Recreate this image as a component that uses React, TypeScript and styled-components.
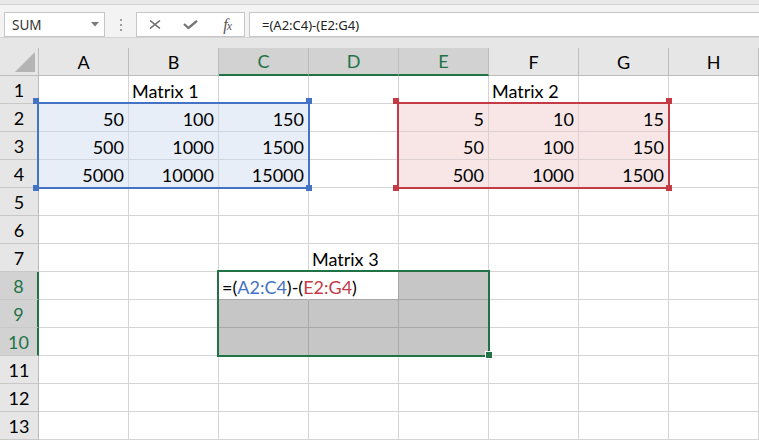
import React from 'react';
import styled, { createGlobalStyle } from 'styled-components';

const GlobalStyle = createGlobalStyle`
  body {
    margin: 0;
    background: #ffffff;
    overflow: hidden;
  }
`;

const COLS = ['A', 'B', 'C', 'D', 'E', 'F', 'G', 'H'];
const ROWS = Array.from({ length: 13 }, (_, i) => i + 1);
const COL_W = 90;
const ROW_H = 28;
const HEAD_W = 39;

const green = '#217346';
const blue = '#4472c4';
const red = '#c43b46';

const Page = styled.div`
  width: 759px;
  height: 440px;
  display: flex;
  flex-direction: column;
  font-family: Lato, 'Open Sans', sans-serif;
`;

const FormulaBar = styled.div`
  height: 48px;
  display: flex;
  flex-direction: column;
  background: #e6e6e6;
  font-family: 'Noto Sans', 'Open Sans', sans-serif;
`;

const TopStrip = styled.div`
  height: 4px;
  background: #e9e9e9;
  border-bottom: 1px solid #d4d4d4;
`;

const ToolRow = styled.div`
  height: 33px;
  box-sizing: border-box;
  padding-top: 7px;
  display: flex;
  align-items: flex-start;
  background: #f3f3f3;
  border-bottom: 1px solid #d4d4d4;
`;

const NameBox = styled.div`
  margin-left: 4px;
  width: 101px;
  height: 25px;
  box-sizing: border-box;
  display: flex;
  align-items: center;
  justify-content: space-between;
  padding: 0 5px 0 7px;
  background: #fff;
  border: 1px solid #c6c6c6;
  font-size: 13.5px;
  color: #333;
`;

const Dots = styled.div`
  width: 31px;
  height: 25px;
  display: flex;
  flex-direction: column;
  align-items: center;
  justify-content: center;
  gap: 3px;

  span {
    width: 2px;
    height: 2px;
    background: #a0a0a0;
  }
`;

const ButtonGroup = styled.div`
  width: 109px;
  height: 25px;
  box-sizing: border-box;
  display: flex;
  background: #fff;
  border: 1px solid #c6c6c6;
`;

const BarButton = styled.div`
  width: 36px;
  display: flex;
  align-items: center;
  justify-content: center;
  color: #6d6d6d;
`;

const Fx = styled.span`
  font-family: 'Liberation Serif', serif;
  font-style: italic;
  font-size: 16px;
  color: #555;
  letter-spacing: -1px;
  padding-left: 2px;

  small {
    font-size: 12px;
  }
`;

const FormulaInput = styled.div`
  flex: 1;
  margin-left: 4px;
  height: 25px;
  box-sizing: border-box;
  display: flex;
  align-items: center;
  padding-left: 12px;
  background: #fff;
  border: 1px solid #c6c6c6;
  border-right: none;
  font-size: 13px;
  color: #222;
`;

const Sheet = styled.div`
  position: relative;
  display: grid;
  grid-template-columns: ${HEAD_W}px repeat(${COLS.length}, ${COL_W}px);
  grid-auto-rows: ${ROW_H}px;
  font-size: 18px;
  line-height: 18px;
  color: #000;
`;

const Corner = styled.div`
  background: #e6e6e6;
  border-right: 1px solid #bcbcbc;
  border-bottom: 1px solid #bcbcbc;
  box-sizing: border-box;
  display: flex;
  align-items: flex-end;
  justify-content: flex-end;
  padding: 0 3px 3px 0;
`;

const ColHeader = styled.div<{ $selected: boolean }>`
  box-sizing: border-box;
  display: flex;
  align-items: center;
  justify-content: center;
  background: ${(p) => (p.$selected ? '#d2d2d2' : '#e6e6e6')};
  color: ${(p) => (p.$selected ? green : '#000')};
  border-right: 1px solid #bcbcbc;
  border-bottom: ${(p) => (p.$selected ? `2px solid ${green}` : '1px solid #bcbcbc')};
`;

const RowHeader = styled.div<{ $selected: boolean }>`
  box-sizing: border-box;
  display: flex;
  align-items: center;
  justify-content: center;
  background: ${(p) => (p.$selected ? '#d2d2d2' : '#e6e6e6')};
  color: ${(p) => (p.$selected ? green : '#000')};
  border-right: ${(p) => (p.$selected ? `2px solid ${green}` : '1px solid #bcbcbc')};
  border-bottom: 1px solid #c8c8c8;
`;

const Cell = styled.div<{ $fill: string; $line: string; $right: boolean; $editing?: boolean }>`
  box-sizing: border-box;
  display: flex;
  align-items: flex-end;
  justify-content: ${(p) => (p.$right ? 'flex-end' : 'flex-start')};
  padding: 0 4px 3px 3px;
  background: ${(p) => p.$fill};
  border-right: 1px solid ${(p) => (p.$editing ? p.$fill : p.$line)};
  border-bottom: 1px solid ${(p) => p.$line};
  white-space: nowrap;
  overflow: ${(p) => (p.$editing ? 'visible' : 'hidden')};
  position: ${(p) => (p.$editing ? 'relative' : 'static')};
  z-index: ${(p) => (p.$editing ? 1 : 'auto')};
`;

const Ref = styled.span<{ $color: string }>`
  color: ${(p) => p.$color};
`;

const RangeBox = styled.div<{ $color: string }>`
  position: absolute;
  box-sizing: border-box;
  border: 2px solid ${(p) => p.$color};
  pointer-events: none;
  z-index: 2;
`;

const Handle = styled.div<{ $color: string }>`
  position: absolute;
  width: 6px;
  height: 6px;
  background: ${(p) => p.$color};
  z-index: 3;
`;

const FillHandle = styled(Handle)`
  outline: 1px solid #fff;
`;

type Range = { c0: number; r0: number; c1: number; r1: number };

const blueRange: Range = { c0: 0, r0: 2, c1: 2, r1: 4 };
const redRange: Range = { c0: 4, r0: 2, c1: 6, r1: 4 };
const greenRange: Range = { c0: 2, r0: 8, c1: 4, r1: 10 };

const values: Record<string, string> = {
  B1: 'Matrix 1',
  F1: 'Matrix 2',
  D7: 'Matrix 3',
};
const m1 = [
  [50, 100, 150],
  [500, 1000, 1500],
  [5000, 10000, 15000],
];
const m2 = [
  [5, 10, 15],
  [50, 100, 150],
  [500, 1000, 1500],
];
m1.forEach((row, r) => row.forEach((v, c) => (values[COLS[c] + (r + 2)] = String(v))));
m2.forEach((row, r) => row.forEach((v, c) => (values[COLS[c + 4] + (r + 2)] = String(v))));

const inRange = (g: Range, c: number, r: number) => c >= g.c0 && c <= g.c1 && r >= g.r0 && r <= g.r1;

// box geometry inside the sheet (header row is row 0)
const rangeRect = (g: Range) => ({
  left: HEAD_W + g.c0 * COL_W - 2,
  top: g.r0 * ROW_H - 2,
  width: (g.c1 - g.c0 + 1) * COL_W + 3,
  height: (g.r1 - g.r0 + 1) * ROW_H + 3,
});

function cellLook(c: number, r: number) {
  if (inRange(blueRange, c, r)) return { fill: '#e8eef8', line: '#d0d6e0' };
  if (inRange(redRange, c, r)) return { fill: '#f8e6e7', line: '#dcd0d1' };
  if (inRange(greenRange, c, r)) {
    const white = r === 8 && c < 4;
    return { fill: white ? '#ffffff' : '#c6c6c6', line: '#a8a8a8' };
  }
  return { fill: '#ffffff', line: '#d4d4d4' };
}

function Selection({ range, color, corners }: { range: Range; color: string; corners: boolean }) {
  const rect = rangeRect(range);
  const pts = corners
    ? [
        [rect.left, rect.top],
        [rect.left + rect.width, rect.top],
        [rect.left, rect.top + rect.height],
        [rect.left + rect.width, rect.top + rect.height],
      ]
    : [];
  return (
    <>
      <RangeBox $color={color} style={rect} />
      {pts.map(([x, y], i) => (
        <Handle key={i} $color={color} style={{ left: x - 4, top: y - 4 }} />
      ))}
      {!corners && <FillHandle $color={color} style={{ left: rect.left + rect.width - 4, top: rect.top + rect.height - 5 }} />}
    </>
  );
}

function Formula() {
  return (
    <span>
      =(<Ref $color={blue}>A2:C4</Ref>)-(<Ref $color={red}>E2:G4</Ref>)
    </span>
  );
}

export default function App() {
  return (
    <Page>
      <GlobalStyle />
      <FormulaBar>
        <TopStrip />
        <ToolRow>
          <NameBox>
            SUM
            <svg width="8" height="5" viewBox="0 0 8 5">
              <path d="M0 0 L8 0 L4 4.5 Z" fill="#7a7a7a" />
            </svg>
          </NameBox>
          <Dots>
            <span />
            <span />
            <span />
          </Dots>
          <ButtonGroup>
            <BarButton>
              <svg width="12" height="9" viewBox="0 0 12 9">
                <path d="M1 0.5 L11 8.5 M11 0.5 L1 8.5" stroke="#6a6a6a" strokeWidth="1.5" />
              </svg>
            </BarButton>
            <BarButton>
              <svg width="15" height="9" viewBox="0 0 15 9">
                <path d="M1 4 L5.5 8 L14 0.8" stroke="#767676" strokeWidth="2.3" fill="none" />
              </svg>
            </BarButton>
            <BarButton>
              <Fx>
                f<small>x</small>
              </Fx>
            </BarButton>
          </ButtonGroup>
          <FormulaInput>=(A2:C4)-(E2:G4)</FormulaInput>
        </ToolRow>
      </FormulaBar>

      <Sheet>
        <Corner>
          <svg width="20" height="20" viewBox="0 0 20 20">
            <path d="M20 0 L20 20 L0 20 Z" fill="#b4b4b4" />
          </svg>
        </Corner>
        {COLS.map((col, c) => (
          <ColHeader key={col} $selected={c >= greenRange.c0 && c <= greenRange.c1}>
            {col}
          </ColHeader>
        ))}
        {ROWS.map((r) => (
          <React.Fragment key={r}>
            <RowHeader $selected={r >= greenRange.r0 && r <= greenRange.r1}>{r}</RowHeader>
            {COLS.map((col, c) => {
              const id = col + r;
              const look = cellLook(c, r);
              const editing = id === 'C8';
              const text = values[id];
              const numeric = text !== undefined && /^\d+$/.test(text);
              return (
                <Cell key={id} $fill={look.fill} $line={look.line} $right={numeric} $editing={editing}>
                  {editing ? <Formula /> : text}
                </Cell>
              );
            })}
          </React.Fragment>
        ))}
        <Selection range={blueRange} color={blue} corners />
        <Selection range={redRange} color={red} corners />
        <Selection range={greenRange} color={green} corners={false} />
      </Sheet>
    </Page>
  );
}
